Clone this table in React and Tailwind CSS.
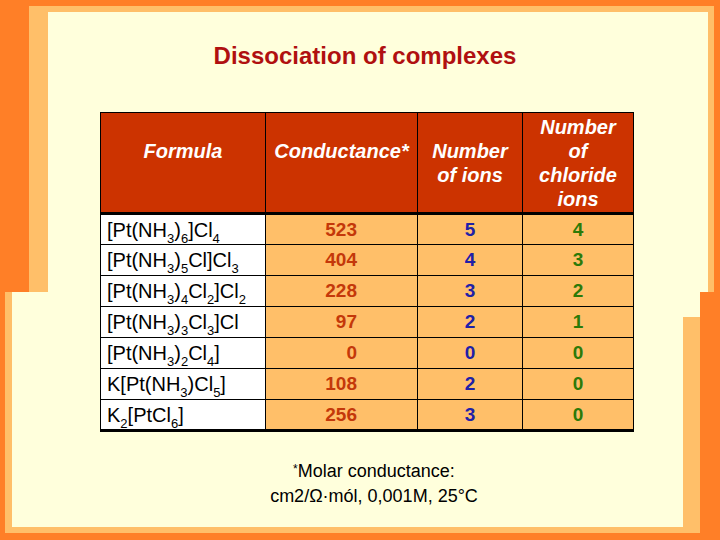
const ROWS = [
  { f: ["[Pt(NH", ["3"], ")", ["6"], "]Cl", ["4"]], c: "523", n: "5", cl: "4" },
  { f: ["[Pt(NH", ["3"], ")", ["5"], "Cl]Cl", ["3"]], c: "404", n: "4", cl: "3" },
  { f: ["[Pt(NH", ["3"], ")", ["4"], "Cl", ["2"], "]Cl", ["2"]], c: "228", n: "3", cl: "2" },
  { f: ["[Pt(NH", ["3"], ")", ["3"], "Cl", ["3"], "]Cl"], c: "97", n: "2", cl: "1" },
  { f: ["[Pt(NH", ["3"], ")", ["2"], "Cl", ["4"], "]"], c: "0", n: "0", cl: "0" },
  { f: ["K[Pt(NH", ["3"], ")Cl", ["5"], "]"], c: "108", n: "2", cl: "0" },
  { f: ["K", ["2"], "[PtCl", ["6"], "]"], c: "256", n: "3", cl: "0" },
];

function Formula({ parts }) {
  return (
    <span>
      {parts.map((p, i) =>
        Array.isArray(p) ? (
          <span key={i} className="relative top-[6px] text-[13px] leading-none">
            {p[0]}
          </span>
        ) : (
          <span key={i}>{p}</span>
        )
      )}
    </span>
  );
}

// slide template: two offset cream panels with light orange rims
function SlideBackground() {
  return (
    <div className="col-start-1 row-start-1 flex flex-col">
      <div className="h-[292px] pt-[6px] pl-[29px] pr-[6px]">
        <div className="h-full pt-[6px] pl-[19px] pr-[6px] bg-[#ffbf69]">
          <div className="h-full bg-[#ffffdc]" />
        </div>
      </div>
      <div className="h-[25px] pl-[5px] pr-[20px] flex">
        <div className="flex-1 pl-[7px] bg-[#ffbf69] flex">
          <div className="flex-1 bg-[#ffffdc]" />
        </div>
      </div>
      <div className="flex-1 pl-[5px] pr-[20px] pb-[7px]">
        <div className="h-full pl-[7px] pr-[17px] pb-[6px] bg-[#ffbf69]">
          <div className="h-full bg-[#ffffdc]" />
        </div>
      </div>
    </div>
  );
}

export default function App() {
  return (
    <div className="grid w-[720px] h-[540px] overflow-hidden bg-[#ff7f27] font-['Liberation_Sans',Arial,sans-serif]">
      <SlideBackground />

      <div className="col-start-1 row-start-1 flex flex-col">
        <h1 className="mt-[42px] h-[28px] text-center pl-[10px] text-[24px] leading-[28px] font-bold text-[#b01010]">
          Dissociation of complexes
        </h1>

        <table className="ml-[100px] mt-[42px] w-[533px] border-collapse table-fixed">
          <colgroup>
            <col className="w-[165px]" />
            <col className="w-[152px]" />
            <col className="w-[105px]" />
            <col className="w-[111px]" />
          </colgroup>
          <thead>
            <tr className="h-[101px] bg-[#cc3300] text-white italic text-[20px] leading-[24px] border-b-[3px] border-black">
              <th className="border border-black align-middle pb-[24px] font-bold">Formula</th>
              <th className="border border-black align-middle pb-[24px] font-bold">Conductance*</th>
              <th className="border border-black align-middle font-bold">
                Number
                <br />
                of ions
              </th>
              <th className="border border-black align-middle font-bold">
                Number
                <br />
                of
                <br />
                chloride
                <br />
                ions
              </th>
            </tr>
          </thead>
          <tbody className="border-b-[3px] border-black">
            {ROWS.map((r, i) => (
              <tr key={i} className="h-[31px] text-[20px] leading-[20px]">
                <td className="border border-black bg-white pl-[6px] text-black whitespace-nowrap">
                  <Formula parts={r.f} />
                </td>
                <td className="border border-black bg-[#ffbf69] text-right pr-[60px] font-bold text-[#c4380a] text-[19px]">
                  {r.c}
                </td>
                <td className="border border-black bg-[#ffbf69] text-center font-bold text-[#2020a8] text-[19px]">
                  {r.n}
                </td>
                <td className="border border-black bg-[#ffbf69] text-center font-bold text-[#2c7a08] text-[19px]">
                  {r.cl}
                </td>
              </tr>
            ))}
          </tbody>
        </table>

        <div className="mt-[28px] pl-[28px] text-center text-[18px] leading-[23px] text-black">
          <p>
            <span className="relative -top-[4px] text-[12px]">*</span>Molar conductance:
          </p>
          <p>cm2/Ω·mól, 0,001M, 25°C</p>
        </div>
      </div>
    </div>
  );
}
